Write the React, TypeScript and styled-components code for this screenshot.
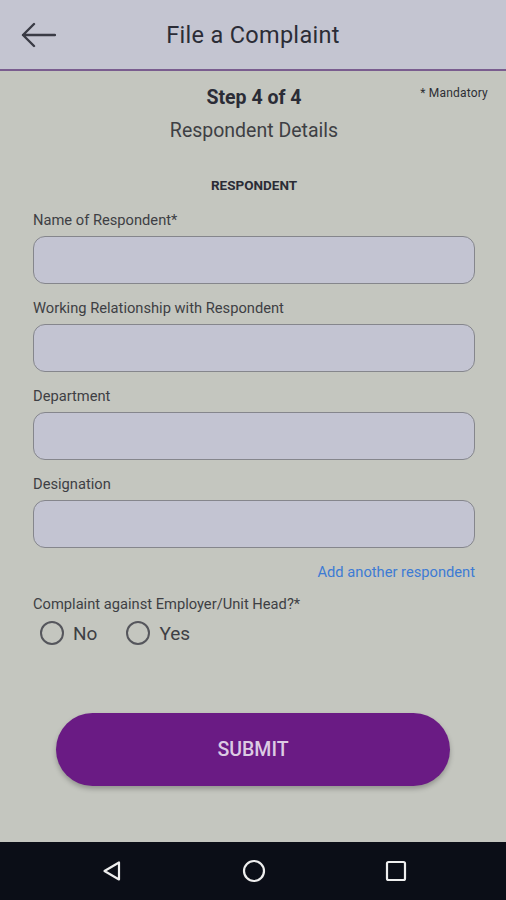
import React from 'react';
import styled, { createGlobalStyle } from 'styled-components';

const HEADER_BG = '#c4c5d1';
const PAGE_BG = '#c4c6bf';
const FIELD_BG = '#c3c4d2';
const PURPLE = '#6a1b84';
const TEXT = '#2b2c36';
const LABEL = '#3e3f44';
const LINK = '#3d7bd4';

const GlobalStyle = createGlobalStyle`
  html, body {
    margin: 0;
    padding: 0;
    background: ${PAGE_BG};
  }
  body {
    font-family: Roboto, "Liberation Sans", sans-serif;
  }
`;

const fields = [
  'Name of Respondent*',
  'Working Relationship with Respondent',
  'Department',
  'Designation',
];

const BackArrow = () => (
  <svg width="36" height="26" viewBox="0 0 36 26" fill="none">
    <path d="M35 13H3M14 2L3 13l11 11" stroke="#3a3b45" strokeWidth="2.4" strokeLinecap="round" strokeLinejoin="round" />
  </svg>
);

const App = () => (
  <Screen>
    <GlobalStyle />
    <Header>
      <BackButton>
        <BackArrow />
      </BackButton>
      <HeaderTitle>File a Complaint</HeaderTitle>
    </Header>
    <Content>
      <StepRow>
        <StepTitle>Step 4 of 4</StepTitle>
        <Mandatory>* Mandatory</Mandatory>
      </StepRow>
      <SubTitle>Respondent Details</SubTitle>
      <SectionTitle>RESPONDENT</SectionTitle>
      <Form>
        {fields.map((label) => (
          <Field key={label}>
            <Label>{label}</Label>
            <Input />
          </Field>
        ))}
      </Form>
      <AddLink>Add another respondent</AddLink>
      <Question>Complaint against Employer/Unit Head?*</Question>
      <RadioGroup>
        <RadioOption>
          <RadioCircle />
          <RadioText>No</RadioText>
        </RadioOption>
        <RadioOption>
          <RadioCircle />
          <RadioText>Yes</RadioText>
        </RadioOption>
      </RadioGroup>
      <SubmitButton>SUBMIT</SubmitButton>
    </Content>
    <NavBar>
      <svg width="24" height="24" viewBox="0 0 24 24" fill="none">
        <path d="M19 3.5v17L4.5 12z" stroke="#eee" strokeWidth="2.2" strokeLinejoin="round" />
      </svg>
      <svg width="24" height="24" viewBox="0 0 24 24" fill="none">
        <circle cx="12" cy="12" r="10" stroke="#eee" strokeWidth="2.2" />
      </svg>
      <svg width="24" height="24" viewBox="0 0 24 24" fill="none">
        <rect x="3" y="3" width="18" height="18" rx="1.5" stroke="#eee" strokeWidth="2.2" />
      </svg>
    </NavBar>
  </Screen>
);

export default App;

const Screen = styled.div`
  display: flex;
  flex-direction: column;
  width: 506px;
  height: 900px;
  background: ${PAGE_BG};
  overflow: hidden;
`;

const Header = styled.div`
  display: flex;
  align-items: center;
  height: 69px;
  background: ${HEADER_BG};
  border-bottom: 2px solid #7a5d8f;
  box-sizing: content-box;
`;

const BackButton = styled.div`
  display: flex;
  align-items: center;
  padding: 0 0 0 20px;
  width: 60px;
  margin-top: 1px;
`;

const HeaderTitle = styled.div`
  flex: 1;
  text-align: center;
  margin-right: 80px;
  font-size: 23.5px;
  color: ${TEXT};
  letter-spacing: 0.3px;
`;

const Content = styled.div`
  flex: 1;
  display: flex;
  flex-direction: column;
  padding: 0 31px 0 33px;
`;

const StepRow = styled.div`
  position: relative;
  margin-top: 15px;
  text-align: center;
`;

const StepTitle = styled.div`
  font-size: 19.5px;
  font-weight: 700;
  color: ${TEXT};
  line-height: 24px;
`;

const Mandatory = styled.div`
  position: absolute;
  right: -13px;
  top: 0;
  font-size: 12px;
  letter-spacing: 0.2px;
  color: #2d2e34;
`;

const SubTitle = styled.div`
  margin-top: 9px;
  text-align: center;
  font-size: 19.5px;
  line-height: 24px;
  color: ${LABEL};
`;

const SectionTitle = styled.div`
  margin-top: 33px;
  text-align: center;
  font-size: 13.5px;
  font-weight: 700;
  line-height: 18px;
  color: ${TEXT};
`;

const Form = styled.div`
  display: flex;
  flex-direction: column;
  gap: 15px;
  margin-top: 17px;
`;

const Field = styled.div`
  display: flex;
  flex-direction: column;
  gap: 7px;
`;

const Label = styled.div`
  font-size: 14.7px;
  line-height: 18px;
  color: ${LABEL};
`;

const Input = styled.div`
  box-sizing: border-box;
  height: 48px;
  background: ${FIELD_BG};
  border: 1px solid #85868c;
  border-radius: 12px;
`;

const AddLink = styled.div`
  margin-top: 15px;
  align-self: flex-end;
  font-size: 14.7px;
  line-height: 18px;
  color: ${LINK};
`;

const Question = styled.div`
  margin-top: 14px;
  font-size: 14.7px;
  line-height: 18px;
  color: ${LABEL};
`;

const RadioGroup = styled.div`
  display: flex;
  gap: 29px;
  margin-top: 9px;
  padding-left: 7px;
  height: 22px;
`;

const RadioOption = styled.div`
  display: flex;
  align-items: center;
  gap: 9px;
`;

const RadioCircle = styled.div`
  width: 20px;
  height: 20px;
  border: 2px solid #55565c;
  border-radius: 50%;
`;

const RadioText = styled.div`
  font-size: 19px;
  color: ${LABEL};
`;

const SubmitButton = styled.div`
  display: flex;
  align-items: center;
  justify-content: center;
  margin: 69px 25px 0 23px;
  height: 73px;
  border-radius: 37px;
  background: ${PURPLE};
  box-shadow: 0 3px 5px rgba(0, 0, 0, 0.25);
  font-size: 19.5px;
  font-weight: 500;
  color: #dccbe3;
`;

const NavBar = styled.div`
  display: flex;
  align-items: center;
  justify-content: space-between;
  height: 58px;
  padding: 0 98px 0 100px;
  background: #0b0e17;
`;
